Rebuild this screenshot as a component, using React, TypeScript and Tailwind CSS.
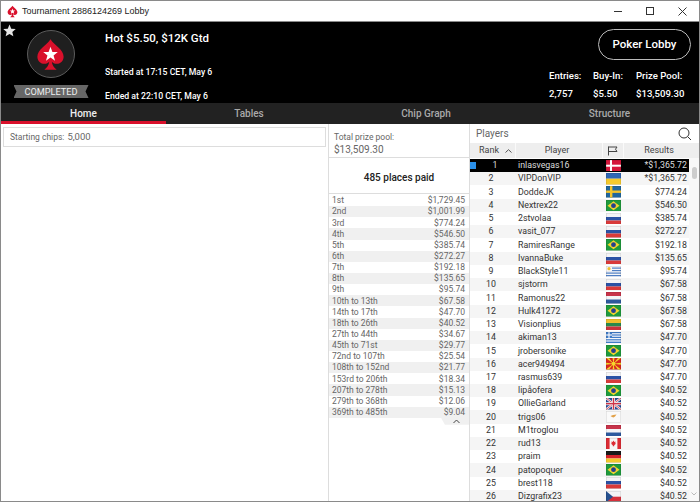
const font = { fontFamily: "Roboto, sans-serif" };

type Flag = "dk" | "ua" | "se" | "br" | "ru" | "uy" | "nl" | "lt" | "gr" | "mk" | "gb" | "cy" | "ca" | "de" | "cz";

const players: [string, Flag, string][] = [
  ["inlasvegas16", "dk", "*$1,365.72"],
  ["VIPDonVIP", "ua", "*$1,365.72"],
  ["DoddeJK", "se", "$774.24"],
  ["Nextrex22", "br", "$546.50"],
  ["2stvolaa", "ru", "$385.74"],
  ["vasit_077", "ru", "$272.27"],
  ["RamiresRange", "br", "$192.18"],
  ["IvannaBuke", "ru", "$135.65"],
  ["BlackStyle11", "uy", "$95.74"],
  ["sjstorm", "ru", "$67.58"],
  ["Ramonus22", "nl", "$67.58"],
  ["Hulk41272", "br", "$67.58"],
  ["Visionplius", "lt", "$67.58"],
  ["akiman13", "gr", "$47.70"],
  ["jrobersonike", "br", "$47.70"],
  ["acer949494", "mk", "$47.70"],
  ["rasmus639", "ru", "$47.70"],
  ["lipåofera", "br", "$40.52"],
  ["OllieGarland", "gb", "$40.52"],
  ["trigs06", "cy", "$40.52"],
  ["M1troglou", "nl", "$40.52"],
  ["rud13", "ca", "$40.52"],
  ["praim", "de", "$40.52"],
  ["patopoquer", "br", "$40.52"],
  ["brest118", "ru", "$40.52"],
  ["Dizgrafix23", "cz", "$40.52"],
];

const payouts = [
  ["1st", "$1,729.45"],
  ["2nd", "$1,001.99"],
  ["3rd", "$774.24"],
  ["4th", "$546.50"],
  ["5th", "$385.74"],
  ["6th", "$272.27"],
  ["7th", "$192.18"],
  ["8th", "$135.65"],
  ["9th", "$95.74"],
  ["10th to 13th", "$67.58"],
  ["14th to 17th", "$47.70"],
  ["18th to 26th", "$40.52"],
  ["27th to 44th", "$34.67"],
  ["45th to 71st", "$29.77"],
  ["72nd to 107th", "$25.54"],
  ["108th to 152nd", "$21.77"],
  ["153rd to 206th", "$18.34"],
  ["207th to 278th", "$15.13"],
  ["279th to 368th", "$12.06"],
  ["369th to 485th", "$9.04"],
];

function FlagIcon({ code }: { code: Flag }) {
  const stripes = (a: string, b: string, c: string) => (
    <>
      <rect width="15" height="4" fill={a} />
      <rect y="4" width="15" height="3.5" fill={b} />
      <rect y="7.5" width="15" height="4" fill={c} />
    </>
  );
  return (
    <svg width="15" height="11.5" viewBox="0 0 15 11.5" className="block">
      {code === "dk" && (
        <>
          <rect width="15" height="11.5" fill="#d5173b" />
          <rect x="4" width="2" height="11.5" fill="#fff" />
          <rect y="4.7" width="15" height="2" fill="#fff" />
        </>
      )}
      {code === "ua" && (
        <>
          <rect width="15" height="5.7" fill="#2f67b5" />
          <rect y="5.7" width="15" height="5.8" fill="#f5c92c" />
        </>
      )}
      {code === "se" && (
        <>
          <rect width="15" height="11.5" fill="#20669e" />
          <rect x="4" width="2.4" height="11.5" fill="#f4c52b" />
          <rect y="4.5" width="15" height="2.4" fill="#f4c52b" />
        </>
      )}
      {code === "br" && (
        <>
          <rect width="15" height="11.5" fill="#1f9a3c" />
          <polygon points="7.5,1.2 13.5,5.7 7.5,10.3 1.5,5.7" fill="#f3d32f" />
          <circle cx="7.5" cy="5.7" r="2.4" fill="#24418c" />
        </>
      )}
      {code === "ru" && stripes("#f4f4f6", "#2b52a5", "#d93a3a")}
      {code === "nl" && stripes("#c8344a", "#f4f4f6", "#2d5a9e")}
      {code === "lt" && stripes("#f0c02e", "#2a8a4c", "#c9343c")}
      {code === "de" && stripes("#1a1a1a", "#d6222a", "#f5c92c")}
      {code === "uy" && (
        <>
          <rect width="15" height="11.5" fill="#f6f6f8" />
          <rect y="1.5" width="15" height="1.2" fill="#4f7fc4" />
          <rect y="4" width="15" height="1.2" fill="#4f7fc4" />
          <rect y="6.5" width="15" height="1.2" fill="#4f7fc4" />
          <rect y="9" width="15" height="1.2" fill="#4f7fc4" />
          <rect width="6" height="5.5" fill="#f6f6f8" />
          <circle cx="3" cy="2.7" r="1.6" fill="#f0c02e" />
        </>
      )}
      {code === "gr" && (
        <>
          <rect width="15" height="11.5" fill="#3f7cc8" />
          <rect y="1.2" width="15" height="1.2" fill="#f4f6fa" />
          <rect y="3.6" width="15" height="1.2" fill="#f4f6fa" />
          <rect y="6" width="15" height="1.2" fill="#f4f6fa" />
          <rect y="8.4" width="15" height="1.2" fill="#f4f6fa" />
          <rect width="6" height="6" fill="#3f7cc8" />
          <rect x="2.4" width="1.2" height="6" fill="#f4f6fa" />
          <rect y="2.4" width="6" height="1.2" fill="#f4f6fa" />
        </>
      )}
      {code === "mk" && (
        <>
          <rect width="15" height="11.5" fill="#d8281f" />
          <path d="M0 0L7.5 5.7L3 0ZM15 0L7.5 5.7L12 0ZM0 11.5L7.5 5.7L3 11.5ZM15 11.5L7.5 5.7L12 11.5ZM6.5 0H8.5L7.5 5.7ZM6.5 11.5H8.5L7.5 5.7ZM0 4.7V6.7L7.5 5.7ZM15 4.7V6.7L7.5 5.7Z" fill="#f5d72c" />
          <circle cx="7.5" cy="5.7" r="2" fill="#f5d72c" />
        </>
      )}
      {code === "gb" && (
        <>
          <rect width="15" height="11.5" fill="#2a4a96" />
          <path d="M0 0L15 11.5M15 0L0 11.5" stroke="#f2f2f2" strokeWidth="2.2" />
          <path d="M0 0L15 11.5M15 0L0 11.5" stroke="#cf3348" strokeWidth="0.8" />
          <rect x="6" width="3" height="11.5" fill="#f2f2f2" />
          <rect y="4.2" width="15" height="3" fill="#f2f2f2" />
          <rect x="6.8" width="1.4" height="11.5" fill="#cf3348" />
          <rect y="5" width="15" height="1.4" fill="#cf3348" />
        </>
      )}
      {code === "cy" && (
        <>
          <rect width="15" height="11.5" fill="#fafafa" />
          <path d="M4.5 5L7 4L10.5 3.5L9 5.5L7.5 6.5L6 6Z" fill="#e2a24a" />
        </>
      )}
      {code === "ca" && (
        <>
          <rect width="15" height="11.5" fill="#f6f6f6" />
          <rect width="3.6" height="11.5" fill="#dc2b33" />
          <rect x="11.4" width="3.6" height="11.5" fill="#dc2b33" />
          <path d="M7.5 2.5L8.3 4L9.6 3.6L9.2 5.4L10.2 5.6L8.2 7.2V8.2H6.8V7.2L4.8 5.6L5.8 5.4L5.4 3.6L6.7 4Z" fill="#dc2b33" />
        </>
      )}
      {code === "cz" && (
        <>
          <rect width="15" height="5.7" fill="#f4f4f6" />
          <rect y="5.7" width="15" height="5.8" fill="#d6313c" />
          <polygon points="0,0 7,5.7 0,11.5" fill="#25508f" />
        </>
      )}
      <rect x="0.25" y="0.25" width="14.5" height="11" fill="none" stroke="#000" strokeOpacity="0.16" strokeWidth="0.5" />
    </svg>
  );
}

function Spade({ size }: { size: number }) {
  return (
    <svg width={size} height={size} viewBox="0 0 24 24">
      <path d="M12 1.5C9.5 5.5 3 8.5 3 13.5C3 16.6 5.4 18.4 7.8 18.4C9.3 18.4 10.5 17.8 11.1 17C10.9 19.2 9.6 21 7.8 22.5H16.2C14.4 21 13.1 19.2 12.9 17C13.5 17.8 14.7 18.4 16.2 18.4C18.6 18.4 21 16.6 21 13.5C21 8.5 14.5 5.5 12 1.5Z" fill="#d9102b" />
      <polygon points="12,6.6 13.3,10.2 17,10.3 14.1,12.6 15.1,16.2 12,14.1 8.9,16.2 9.9,12.6 7,10.3 10.7,10.2" fill="#fff" />
    </svg>
  );
}

export default function App() {
  return (
    <div className="w-[700px] h-[502px] overflow-hidden bg-white flex flex-col border-x border-b border-t border-[#8a8a8a] text-[#333]" style={font}>
      {/* title bar */}
      <div className="h-[21px] bg-white flex items-center shrink-0 border-b border-[#8a8a8a]">
        <div className="ml-[5px] mr-[3px]"><Spade size={13} /></div>
        <span className="text-[9px] text-[#222] leading-none" style={{ fontFamily: "'Liberation Sans', sans-serif" }}>Tournament 2886124269 Lobby</span>
        <div className="ml-auto flex items-center h-full text-[#333]">
          <div className="w-[32px] flex justify-center"><div className="w-[8px] h-px bg-[#333]" /></div>
          <div className="w-[32px] flex justify-center"><div className="w-[8px] h-[8px] border border-[#333]" /></div>
          <div className="w-[32px] flex justify-center mr-[1px]">
            <svg width="9" height="9" viewBox="0 0 9 9"><path d="M0.5 0.5L8.5 8.5M8.5 0.5L0.5 8.5" stroke="#333" /></svg>
          </div>
        </div>
      </div>

      {/* header */}
      <div className="h-[81px] bg-black flex text-white shrink-0 relative">
        <svg className="absolute left-[2px] top-[2px]" width="13" height="13" viewBox="0 0 24 24">
          <polygon points="12,1 15.2,8.6 23.5,9.3 17.2,14.7 19.1,22.8 12,18.5 4.9,22.8 6.8,14.7 0.5,9.3 8.8,8.6" fill="#e4e4e4" />
        </svg>
        <div className="w-[99px] flex flex-col items-center pt-[8px]">
          <div className="w-[48px] h-[48px] rounded-full bg-[#1f1f1f] border border-[#5c5c5c] flex items-center justify-center">
            <Spade size={35} />
          </div>
          <div
            className="mt-[7px] w-[75px] h-[13px] bg-[#666] text-[#eee] text-[9.2px] leading-[13px] text-center ml-px"
            style={{ clipPath: "polygon(0 0, 100% 0, 96% 50%, 100% 100%, 0 100%, 4% 50%)" }}
          >
            COMPLETED
          </div>
        </div>
        <div className="ml-[5px] flex flex-col">
          <div className="mt-[9px] text-[11.5px] font-medium leading-[14px]">Hot $5.50, $12K Gtd</div>
          <div className="mt-[21px] text-[8.7px] font-medium leading-[12px]">Started at 17:15 CET, May 6</div>
          <div className="mt-[12px] text-[8.7px] font-medium leading-[12px]">Ended at 22:10 CET, May 6</div>
        </div>
        <div className="ml-auto flex flex-col items-end pr-[7px]">
          <div className="mt-[7px] mr-px w-[93px] h-[31px] rounded-full border border-[#bbb] text-[11.5px] font-medium flex items-center justify-center">Poker Lobby</div>
          <div className="mt-[10px] flex text-[9.6px] font-medium leading-[12px]">
            <div className="w-[44px]">
              <div>Entries:</div>
              <div className="mt-[6px]">2,757</div>
            </div>
            <div className="w-[43px]">
              <div>Buy-In:</div>
              <div className="mt-[6px]">$5.50</div>
            </div>
            <div className="w-[56px]">
              <div>Prize Pool:</div>
              <div className="mt-[6px]">$13,509.30</div>
            </div>
          </div>
        </div>
      </div>

      {/* tabs */}
      <div className="h-[21px] bg-[#222] flex shrink-0 text-[10px] font-medium text-[#aaa]">
        <div className="w-[165px] text-center text-[#eee] border-b-[3px] border-[#d9102b] leading-[21px]">Home</div>
        <div className="w-[166px] text-center leading-[21px]">Tables</div>
        <div className="w-[188px] text-center leading-[21px]">Chip Graph</div>
        <div className="flex-1 text-center leading-[21px]">Structure</div>
      </div>

      {/* body */}
      <div className="flex-1 flex min-h-0">
        <div className="w-[327px] shrink-0 px-[2px] pt-[3px]">
          <div className="h-[20px] border border-[#ddd] flex items-center pl-[6px] text-[8.5px] text-[#666]">
            Starting chips:<span className="ml-[3px] text-[9.5px]">5,000</span>
          </div>
        </div>

        <div className="w-[141px] shrink-0 border-l border-[#ddd] text-[#666]">
          <div className="h-[34px] border-b border-[#ddd] pl-[5px] pt-[7px] text-[8.5px] leading-[12px]">
            Total prize pool:
            <div className="text-[10px] leading-[13px]">$13,509.30</div>
          </div>
          <div className="h-[36px] border-b border-[#ddd] flex items-center justify-center pt-[3px] text-[10px] font-medium text-[#222]">485 places paid</div>
          <div className="pt-[1px]">
            {payouts.map(([place, prize], i) => (
              <div key={place} className={`h-[11.15px] flex justify-between items-center pl-[3px] pr-[4px] text-[8.5px] leading-none ${i % 2 === 1 ? "bg-[#f0f0f0]" : "bg-white"}`}>
                <span>{place}</span>
                <span>{prize}</span>
              </div>
            ))}
          </div>
          <div className="flex justify-end">
            <div
              className="w-[28px] h-[7px] bg-[#f0f0f0] flex justify-end pr-[9px]"
              style={{ clipPath: "polygon(0 0, 100% 0, 100% 100%, 14% 100%)" }}
            >
              <svg width="7" height="5" viewBox="0 0 7 5" className="mt-px"><path d="M0.5 4L3.5 1L6.5 4" stroke="#444" fill="none" /></svg>
            </div>
          </div>
        </div>

        <div className="flex-1 min-w-0 flex flex-col border-l border-[#ddd]">
          <div className="h-[19px] shrink-0 flex items-center justify-between pl-[6px] pr-[7px] text-[10px] text-[#666]">
            Players
            <svg width="14" height="14" viewBox="0 0 14 14" fill="none" stroke="#333"><circle cx="6" cy="6" r="5" /><path d="M9.7 9.7L13 13" /></svg>
          </div>
          <div className="h-[15px] shrink-0 bg-[#eee] flex text-[9px] text-[#444] items-center">
            <div className="w-[45px] h-full flex items-center justify-center gap-[6px] pl-[6px]">
              Rank
              <svg width="7" height="4" viewBox="0 0 7 4"><path d="M0.5 3.5L3.5 0.7L6.5 3.5" stroke="#555" fill="none" /></svg>
            </div>
            <div className="w-[88px] h-full border-x border-[#fafafa] flex items-center justify-center pr-[4px]">Player</div>
            <div className="w-[20px] h-full flex items-center justify-center">
              <svg width="10" height="10" viewBox="0 0 10 10" fill="none" stroke="#444"><path d="M0.5 0.5V9.5M0.5 1H9L7.5 3.2L9 5.5H0.5" /></svg>
            </div>
            <div className="flex-1 h-full border-l border-[#fafafa] flex items-center justify-center pr-[5px]">Results</div>
          </div>
          <div className="flex-1 min-h-0 overflow-hidden flex relative">
            <div className="flex-1 min-w-0 pt-px">
              {players.map(([name, flag, result], i) => (
                <div
                  key={name}
                  className={`h-[13.24px] flex items-center text-[8.8px] leading-none relative ${i === 0 ? "bg-black text-[#ddd]" : i % 2 === 1 ? "bg-[#f5f5f5] text-[#333]" : "bg-white text-[#333]"}`}
                >
                  {i === 0 && <div className="absolute left-0 top-[3px] w-[6px] h-[7px] bg-[#2a8fe8]" />}
                  <div className={`w-[42px] text-center shrink-0 ${i === 0 ? "pl-[8px]" : ""}`}>{i + 1}</div>
                  <div className="w-[91px] pl-[6px] shrink-0">{name}</div>
                  <div className="w-[21px] flex justify-center shrink-0"><FlagIcon code={flag} /></div>
                  <div className="flex-1 text-right pr-[2px]">{result}</div>
                </div>
              ))}
            </div>
            <div className="w-[10px] shrink-0 bg-[#f8f8f8] flex flex-col items-center relative">
              <div className="mt-[9px] ml-[1px] w-[5px] h-[12px] rounded-full bg-[#cdcdcd]" />
              <svg className="absolute bottom-[5px] left-[2px]" width="6" height="4" viewBox="0 0 6 4"><path d="M0.5 0.5L3 3L5.5 0.5" stroke="#bbb" fill="none" /></svg>
            </div>
          </div>
        </div>
      </div>
    </div>
  );
}
